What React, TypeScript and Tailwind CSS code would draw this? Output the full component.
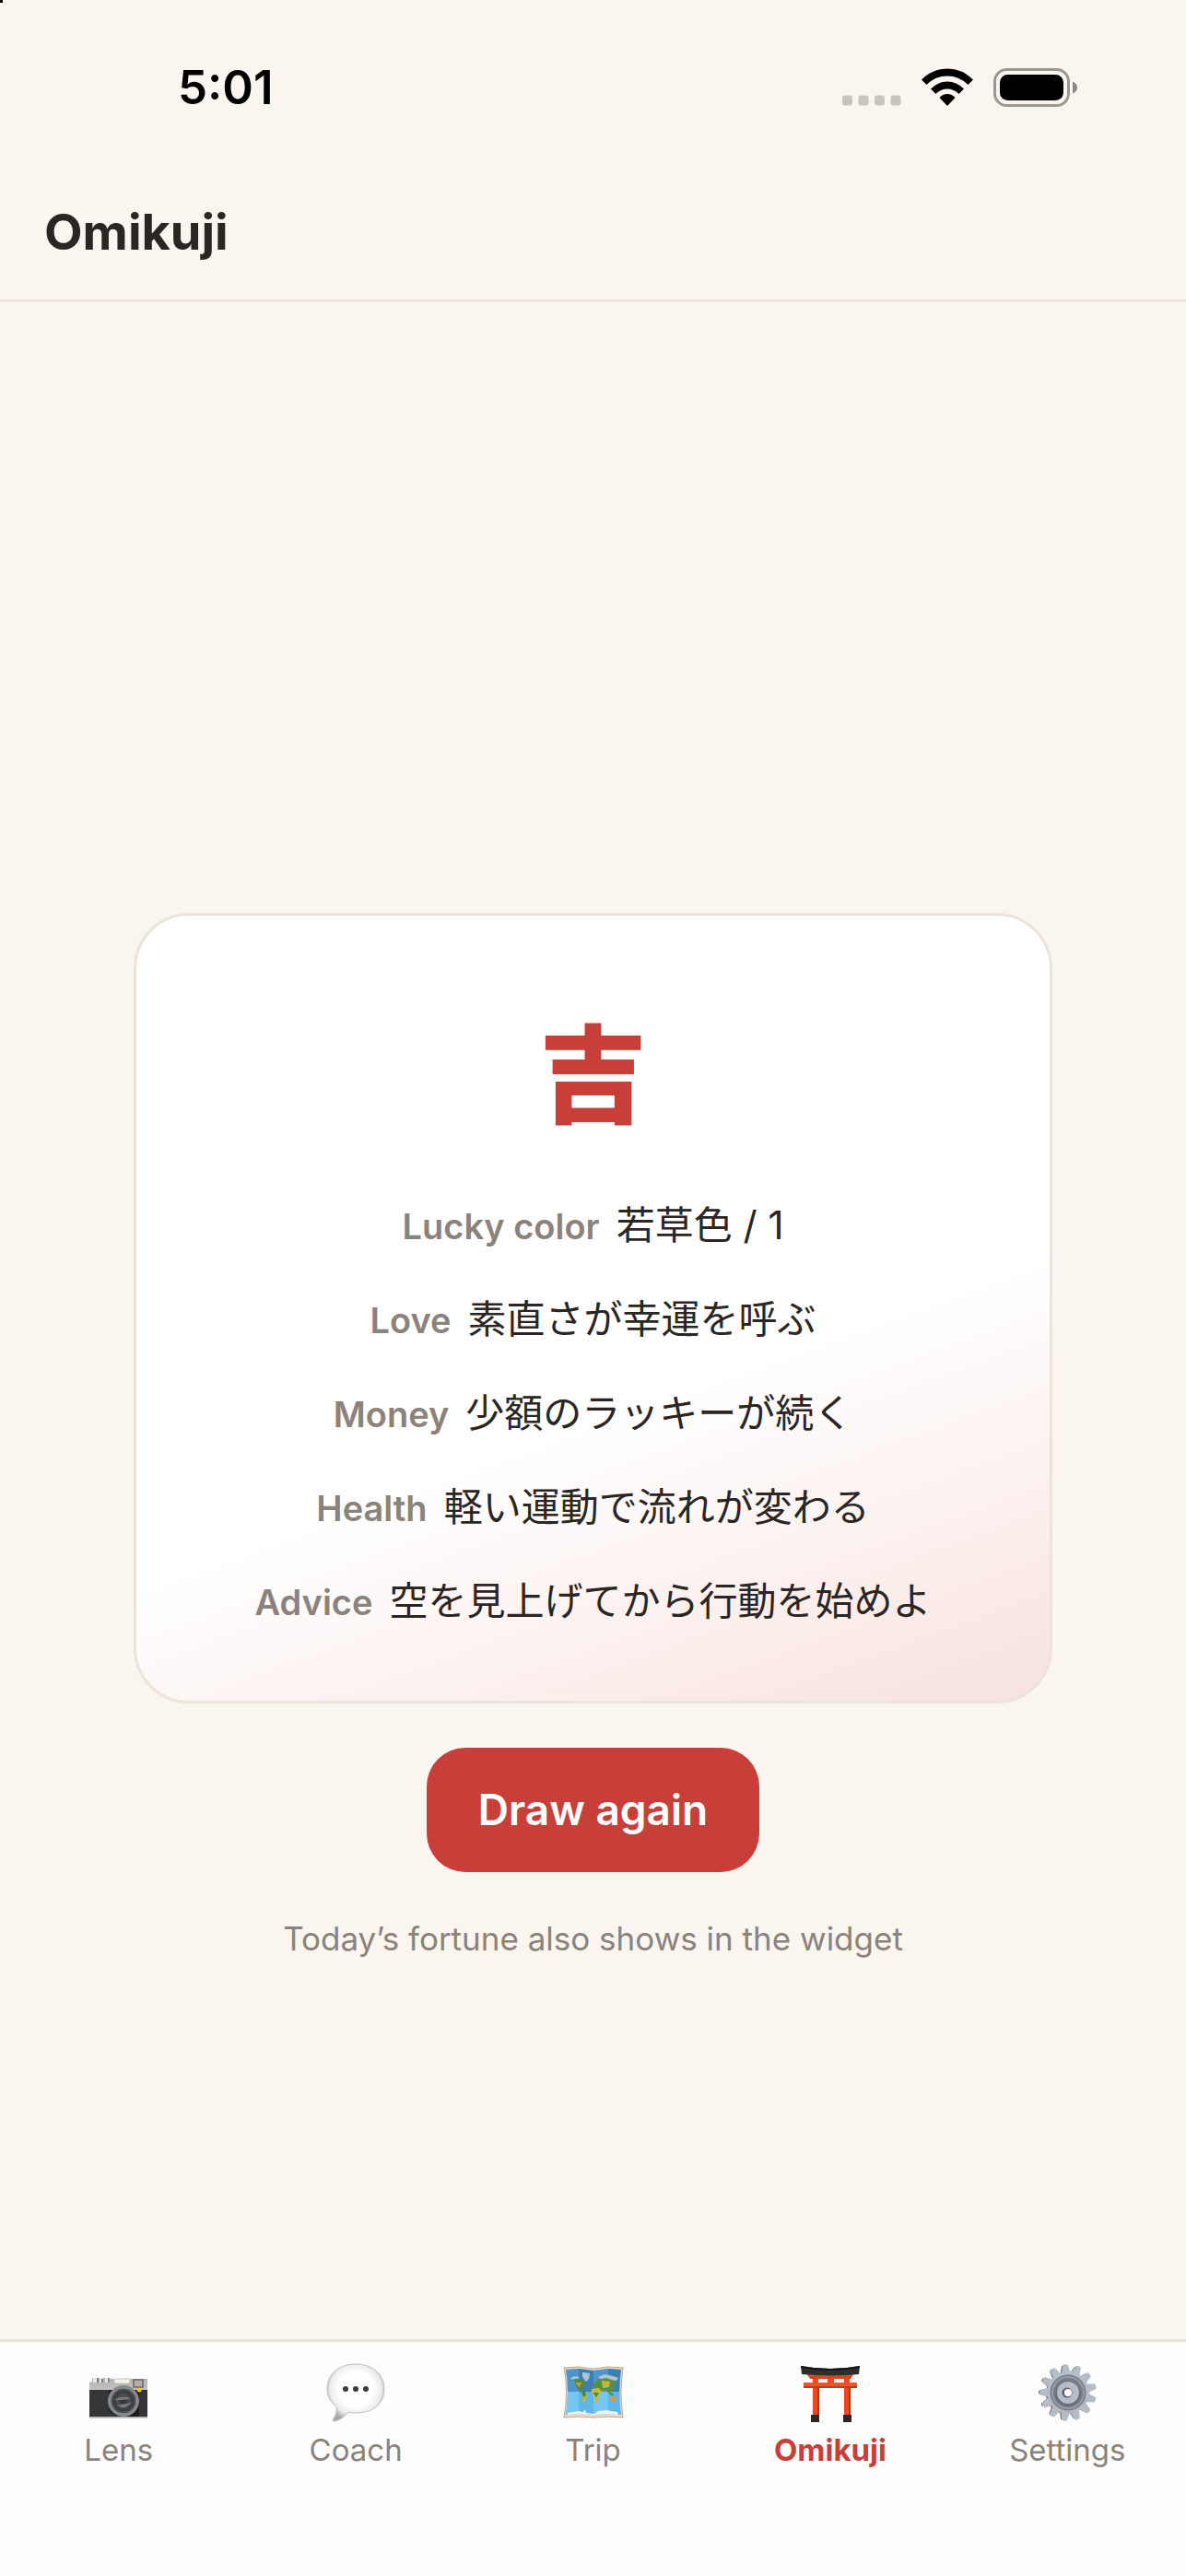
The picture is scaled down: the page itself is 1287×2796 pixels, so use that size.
import type { ReactNode } from "react";

type Tab = {
  title: string;
  path: string;
  icon: () => ReactNode;
};

const fortunes = [
  { label: "Lucky color", value: "若草色 / 1" },
  { label: "Love", value: "素直さが幸運を呼ぶ" },
  { label: "Money", value: "少額のラッキーが続く" },
  { label: "Health", value: "軽い運動で流れが変わる" },
  { label: "Advice", value: "空を見上げてから行動を始めよ" },
];

const gearTeeth = Array.from({ length: 13 }, (_, i) => (i * 360) / 13);

function CameraIcon() {
  return (
    <svg viewBox="0 0 66 66" className="size-[66px]" aria-hidden="true">
      <defs>
        <linearGradient id="cam-top" x1="0" y1="0" x2="0" y2="1">
          <stop offset="0" stopColor="#b4b4b4" />
          <stop offset="1" stopColor="#dcdcdc" />
        </linearGradient>
        <radialGradient id="cam-lens">
          <stop offset="0" stopColor="#2c2e30" />
          <stop offset="0.6" stopColor="#4b4e52" />
          <stop offset="1" stopColor="#33363a" />
        </radialGradient>
      </defs>
      <path d="M4 17h19l1 1h40v43H1V23q0-2 3-2z" fill="url(#cam-top)" />
      <path d="M5 17h4v5H5zM12 17h4v5h-4zM18 17h4v5h-4z" fill="#e6e6e6" />
      <path d="M9 17h2v5H9zM14 18h2v4h-2zM21 17h1.500v5H21z" fill="#7d7d7d" />
      <rect x="28" y="18" width="17" height="5" rx="1" fill="#f5f3e6" stroke="#b8b6aa" strokeWidth="0.8" />
      <rect x="49" y="19" width="10" height="8" fill="#b9aea9" stroke="#6c6563" strokeWidth="1.500" />
      <path d="M1 30h63v29H1z" fill="#353637" />
      <path d="M22 51q4 8 16 8h17V30H22z" fill="#1a1b1b" />
      <path d="M1 59h63v1.500H1z" fill="#b5b5b5" />
      <circle cx="38" cy="42" r="17" fill="#85898c" />
      <circle cx="38" cy="42" r="14" fill="#4a4d51" stroke="#9b9ea0" strokeWidth="0.8" />
      <circle cx="38" cy="42" r="11" fill="url(#cam-lens)" />
      <path d="M28 41q8-6 18-2-4 2-10 2zM30 46q9 1 17-3-5 7-11 6z" fill="#777a7c" />
      <circle cx="55" cy="30" r="2.500" fill="#efbf2e" />
    </svg>
  );
}

function ChatIcon() {
  return (
    <svg viewBox="0 0 66 66" className="size-[66px]" aria-hidden="true">
      <defs>
        <radialGradient id="chat-fill" cx="0.5" cy="0.44" r="0.56">
          <stop offset="0.55" stopColor="#ffffff" />
          <stop offset="0.8" stopColor="#ebebeb" />
          <stop offset="1" stopColor="#a9a9a9" />
        </radialGradient>
      </defs>
      <path
        d="M33 2C50 2 64 12 64 29S51 55 33 55q-5 0-8-1-6 8-15 10-3 0-1-3 4-5 3-13Q2 41 2 29C2 12 16 2 33 2z"
        fill="url(#chat-fill)"
        stroke="#b3b3b3"
        strokeWidth="0.8"
      />
      <circle cx="22" cy="29" r="3" fill="#3b3b3b" />
      <circle cx="33" cy="29" r="3" fill="#3b3b3b" />
      <circle cx="44" cy="29" r="3" fill="#3b3b3b" />
    </svg>
  );
}

function MapIcon() {
  return (
    <svg viewBox="0 0 66 66" className="size-[66px]" aria-hidden="true">
      <path d="M1 6l16-1 16 2 16-2 16 1q-4 26 0 54l-16-1-16 1-16-1-16 1q5-28 0-54z" fill="#ecd9c6" stroke="#bd8f75" strokeWidth="0.8" />
      <path d="M3 8l14-1 16 2 16-2 14 1q-3 24 0 49l-14-1-16 1-16-1-14 1q4-24 0-49z" fill="#5cb6ea" />
      <path d="M3 8l14-1v25H5Q5 20 3 8zM33 9l16-2v25H33z" fill="#4a97cf" />
      <path d="M17 7l16 2v23H17zM49 7l14 1q-2 12-2 24H49z" fill="#3d7fb3" />
      <path d="M5 32h12v24l-14 1q2-12 2-25zM33 32h16v24l-16 1z" fill="#74c6f3" />
      {/* Ice */}
      <path d="M21 11l8 1-1 6-3 3-4-5zM7 18l5-3 6 1-2 3zM38 16l7-3 9 2 6 2-2 3-16-1z" fill="#aec4d2" />
      <path d="M5 55l11-2 6 1 2-3 1 4 9 1 4-3 9-1 12 2 1 3-11-1-16 1-16-1-12 1z" fill="#eef5fa" />
      {/* Americas */}
      <path d="M11 19q6-3 12 1 2 3 0 5l-3 3 2 4-5-2-3-4q0-4-3-7z" fill="#5d8a36" />
      <path d="M14 22l6 0-2 5-3-2z" fill="#b3a545" />
      <path d="M20 32l6 1 1 4-3 4-2 6-1-9z" fill="#b9b342" />
      <path d="M20 32l4 0 1 4-3 2z" fill="#3f8c37" />
      {/* Africa, Europe and Asia */}
      <path d="M33 25l4-6 10-2 11 4-3 4 0 5-3 1-2 3-3-4-5 1-7-2z" fill="#5a9038" />
      <path d="M42 20l9 1-1 6-7 1z" fill="#c1b44a" />
      <path d="M31 29l8-1 3 4-3 5-2 7-2-1-1-7-3-3z" fill="#c6b749" />
      <path d="M33 33l6 0-3 5z" fill="#418837" />
      <path d="M51 38l4-2 3 4-3 3-4-2z" fill="#d59b42" />
      <path d="M50 33l4 1 1 2-4-1z" fill="#3d7b35" />
    </svg>
  );
}

function ToriiIcon() {
  return (
    <svg viewBox="0 0 66 66" className="size-[66px]" aria-hidden="true">
      <path d="M14 19h6v39h-6zM48 19h6v39h-6z" fill="#e9491f" />
      <path d="M19 27h2v31h-2zM53 27h2v31h-2z" fill="#b53217" />
      <path d="M7 12q26 4 52 0l-4 6H11z" fill="#f4542a" />
      <path d="M10 15h46l-1 3H12z" fill="#d8421d" />
      <path d="M14 18h6v5h-6zM30 17h7v6h-7zM48 18h6v5h-6z" fill="#e9491f" />
      <path d="M4 22h58v6H4z" fill="#f2532a" />
      <path d="M4 26h58v2H4z" fill="#c43a1b" />
      <path d="M1 4q32 6 64 0l-1 9q-30 3-62 0z" fill="#302d2e" />
      <path d="M1 4q32 6 64 0v2q-32 6-64 0z" fill="#161516" />
      <path d="M12 57h9v8h-9zM47 57h9v8h-9z" fill="#2c2627" />
    </svg>
  );
}

function GearIcon() {
  return (
    <svg viewBox="0 0 66 66" className="size-[66px]" aria-hidden="true">
      <defs>
        <linearGradient id="gear-face" x1="0" y1="0" x2="0" y2="1">
          <stop offset="0" stopColor="#b4c0cc" />
          <stop offset="1" stopColor="#b8b7c0" />
        </linearGradient>
      </defs>
      <g fill="#5b6066">
        {gearTeeth.map((angle) => (
          <path key={angle} d="M28 12l2-8q2-2 4 0l2 8z" transform={`rotate(${angle - 6} 32 33)`} />
        ))}
        <circle cx="32" cy="34" r="22" />
      </g>
      <g fill="#b3bdc8">
        {gearTeeth.map((angle) => (
          <path key={angle} d="M29 13l2-10q3-2 6 0l2 10z" transform={`rotate(${angle - 6} 34 33)`} />
        ))}
      </g>
      <circle cx="34" cy="33" r="23" fill="url(#gear-face)" />
      <circle cx="34" cy="33" r="19.500" fill="#747d86" />
      <circle cx="34" cy="33" r="17" fill="none" stroke="#949da7" strokeWidth="2" />
      <circle cx="34" cy="34" r="13.500" fill="#666d76" />
      <circle cx="34" cy="33" r="12" fill="#b4bcc6" />
      <circle cx="33" cy="33" r="5.500" fill="#59616a" />
      <circle cx="34" cy="33" r="4" fill="#fefdfd" />
    </svg>
  );
}

const tabs: Tab[] = [
  { title: "Lens", path: "#lens", icon: CameraIcon },
  { title: "Coach", path: "#coach", icon: ChatIcon },
  { title: "Trip", path: "#trip", icon: MapIcon },
  { title: "Omikuji", path: "#omikuji", icon: ToriiIcon },
  { title: "Settings", path: "#settings", icon: GearIcon },
];

function StatusBar() {
  return (
    <div className="flex h-[186px] items-center justify-between pt-1 pr-[118px] pl-[193px]">
      <span className="text-[51px] leading-[60px] font-semibold text-black">5:01</span>
      <div className="flex items-center gap-[22px]">
        <svg viewBox="0 0 64 42" className="h-[42px] w-16" fill="#c8c5be" aria-hidden="true">
          <rect x="0" y="29.500" width="11" height="11" rx="3" />
          <rect x="17.500" y="29.500" width="11" height="11" rx="3" />
          <rect x="35" y="29.500" width="11" height="11" rx="3" />
          <rect x="52.500" y="29.500" width="11" height="11" rx="3" />
        </svg>
        <svg viewBox="0 0 56 42" className="h-[42px] w-14" aria-hidden="true">
          <path d="M0 12.5Q12 .5 28 .5t28 12L50.500 18Q41 8.500 28 8.500T5.500 18z" />
          <path d="M10 22.500Q18 14.500 28 14.500t18 8L40.500 28Q35 22.500 28 22.500T15.500 28z" />
          <path d="M19.500 32Q23 28 28 28t8.500 4L28 41z" />
        </svg>
        <svg viewBox="0 0 91 42" className="h-[42px] w-[91px]" aria-hidden="true">
          <rect x="1.500" y="1.500" width="80" height="39" rx="13" fill="none" stroke="#9b9892" strokeWidth="3" />
          <rect x="7" y="7" width="69" height="28" rx="8.500" />
          <path d="M86 14.500q5 2 5 6.500t-5 6.500z" fill="#8b8883" />
        </svg>
      </div>
    </div>
  );
}

export default function App() {
  return (
    <div className="relative flex min-h-screen flex-col bg-[#faf5ee] font-['Inter','Noto_Sans_CJK_JP',sans-serif] text-[#2b2523]">
      <span className="absolute top-0 left-0 size-[3px] bg-black" />
      <StatusBar />

      {/* Header */}
      <header className="border-b-[3px] border-[#ece3da] px-12 pt-[34px] pb-[41px]">
        <h1 className="text-[54px] leading-[64px] font-bold">Omikuji</h1>
      </header>

      {/* Fortune */}
      <main className="flex flex-1 flex-col items-center justify-center gap-12 pt-[252px]">
        <section className="flex flex-col items-center gap-[42px] rounded-[60px] border-[3px] border-[#ebe4da] bg-linear-160 from-white from-60% to-[#f7e2de] px-[129px] pt-[84px] pb-[78px]">
          <h2 className="text-[116px] leading-[180px] font-black text-[#c83f39]">吉</h2>
          {fortunes.map((item) => (
            <p key={item.label} className="flex items-baseline gap-[18px] text-[42px] leading-[60px]">
              <span className="text-[38px] leading-none font-semibold text-[#8b827c]">{item.label}</span>
              <span>{item.value}</span>
            </p>
          ))}
        </section>
        <button
          type="button"
          className="rounded-[42px] bg-[#c83f39] px-14 py-[39px] text-[46px] leading-[57px] font-semibold text-white"
        >
          Draw again
        </button>
        <p className="text-[35px] leading-[48px] text-[#8b827c]">Today’s fortune also shows in the widget</p>
      </main>

      {/* Tab bar */}
      <nav className="flex border-t-[3px] border-[#e9e4d9] bg-[#fefdfd] pt-[22px] pb-[112px]">
        {tabs.map((tab) => (
          <a
            key={tab.path}
            href={tab.path}
            className={`flex flex-1 basis-0 flex-col items-center gap-1 text-[33px] leading-[50px] ${tab.title === "Omikuji" ? "font-bold text-[#c83f39]" : "text-[#8b827c]"}`}
          >
            <tab.icon />
            <span>{tab.title}</span>
          </a>
        ))}
      </nav>
    </div>
  );
}
